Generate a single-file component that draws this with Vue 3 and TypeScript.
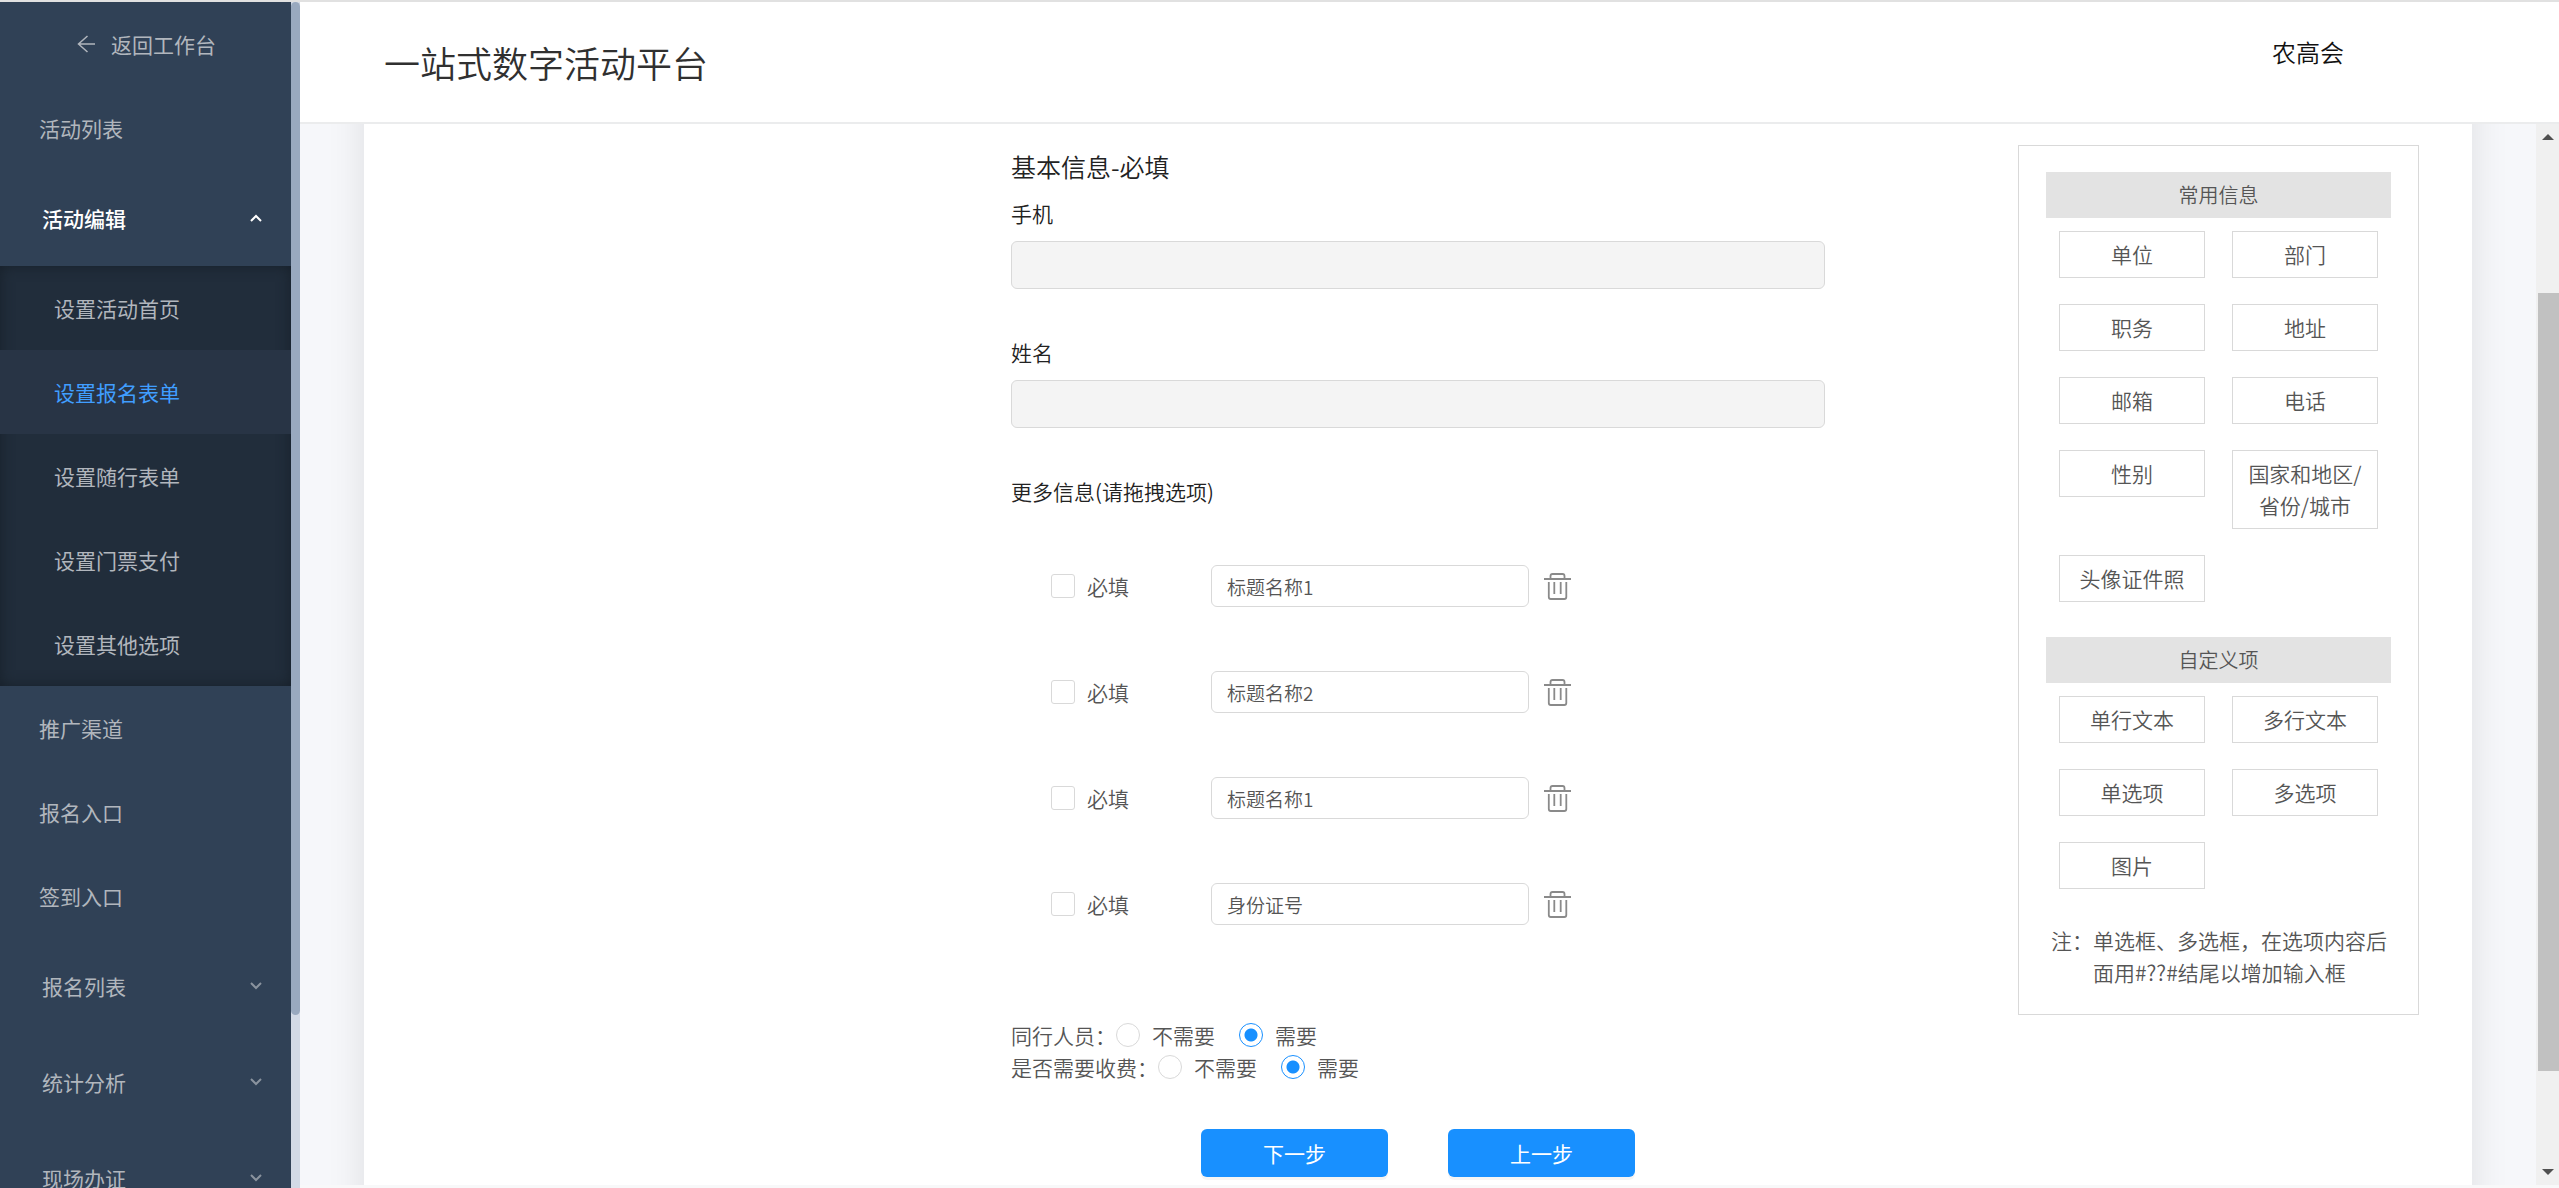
<script setup lang="ts">
import { ref } from 'vue'

interface MenuItem {
  label: string
  group?: boolean
  open?: boolean
  children?: { label: string; active?: boolean }[]
}

interface CustomField {
  id: number
  title: string
  required: boolean
}

const menu: MenuItem[] = [
  { label: '活动列表' },
  {
    label: '活动编辑',
    group: true,
    open: true,
    children: [
      { label: '设置活动首页' },
      { label: '设置报名表单', active: true },
      { label: '设置随行表单' },
      { label: '设置门票支付' },
      { label: '设置其他选项' },
    ],
  },
  { label: '推广渠道' },
  { label: '报名入口' },
  { label: '签到入口' },
  { label: '报名列表', group: true },
  { label: '统计分析', group: true },
  { label: '现场办证', group: true },
]

const fields = ref<CustomField[]>([
  { id: 1, title: '标题名称1', required: false },
  { id: 2, title: '标题名称2', required: false },
  { id: 3, title: '标题名称1', required: false },
  { id: 4, title: '身份证号', required: false },
])

const companion = ref('yes')
const charge = ref('yes')

const commonItems = ['单位', '部门', '职务', '地址', '邮箱', '电话', '性别', '国家和地区/省份/城市', '头像证件照']
const customItems = ['单行文本', '多行文本', '单选项', '多选项', '图片']

function removeField(id: number) {
  fields.value = fields.value.filter((f) => f.id !== id)
}
</script>

<template>
  <div class="app">
    <aside class="sidebar">
      <nav class="menu">
        <a href="#" class="back">
          <svg width="18" height="18" viewBox="0 0 18 18" fill="none" stroke="currentColor" stroke-width="1.5">
            <path d="M18 9H1.500M10.500 1L1.500 9l9 8" />
          </svg>
          <span>返回工作台</span>
        </a>
        <template v-for="item in menu" :key="item.label">
          <a href="#" class="item" :class="{ group: item.group, open: item.open }">
            <span>{{ item.label }}</span>
            <svg v-if="item.group" class="chevron" width="12" height="8" viewBox="0 0 12 8" fill="none" stroke="currentColor" stroke-width="2">
              <path :d="item.open ? 'M1 7l5-5 5 5' : 'M1 1l5 5 5-5'" />
            </svg>
          </a>
          <div v-if="item.children" class="submenu">
            <a v-for="child in item.children" :key="child.label" href="#" class="subitem" :class="{ active: child.active }">{{ child.label }}</a>
          </div>
        </template>
      </nav>
      <div class="side-track"><div class="side-thumb"></div></div>
    </aside>

    <div class="main">
      <header class="header">
        <h1 class="title">一站式数字活动平台</h1>
        <span class="user">农高会</span>
      </header>

      <div class="body">
        <div class="scroller">
          <div class="card">
            <form class="form" @submit.prevent>
              <h2 class="heading">基本信息-必填</h2>
              <div class="field">
                <label for="phone">手机</label>
                <input id="phone" type="text" disabled />
              </div>
              <div class="field">
                <label for="name">姓名</label>
                <input id="name" type="text" disabled />
              </div>
              <h3 class="subheading">更多信息(请拖拽选项)</h3>
              <div class="rows">
                <div v-for="f in fields" :key="f.id" class="row">
                  <label class="required">
                    <input v-model="f.required" type="checkbox" />
                    <span>必填</span>
                  </label>
                  <input v-model="f.title" class="name-input" type="text" aria-label="标题" />
                  <button type="button" class="trash" aria-label="删除" @click="removeField(f.id)">
                    <svg width="27" height="27" viewBox="0 0 27 27" fill="none" stroke="#8a8a8a" stroke-width="1.800">
                      <path d="M0 6h27M6.500 6V3q0-2 2-2h10q2 0 2 2v3" />
                      <path d="M4.800 9v15q0 2 2 2h13.500q2 0 2-2V9" />
                      <path d="M10.300 9v12M16.700 9v12" />
                    </svg>
                  </button>
                </div>
              </div>
              <div class="options">
                <div class="option" role="radiogroup" aria-label="同行人员">
                  <span>同行人员：</span>
                  <label><input v-model="companion" type="radio" name="companion" value="no" />不需要</label>
                  <label><input v-model="companion" type="radio" name="companion" value="yes" />需要</label>
                </div>
                <div class="option" role="radiogroup" aria-label="是否需要收费">
                  <span>是否需要收费：</span>
                  <label><input v-model="charge" type="radio" name="charge" value="no" />不需要</label>
                  <label><input v-model="charge" type="radio" name="charge" value="yes" />需要</label>
                </div>
              </div>
              <div class="actions">
                <button type="button" class="primary">下一步</button>
                <button type="button" class="primary">上一步</button>
              </div>
            </form>

            <section class="panel">
              <h4 class="panel-title">常用信息</h4>
              <div class="chips">
                <button v-for="t in commonItems" :key="t" type="button" class="chip">{{ t }}</button>
              </div>
              <h4 class="panel-title">自定义项</h4>
              <div class="chips">
                <button v-for="t in customItems" :key="t" type="button" class="chip">{{ t }}</button>
              </div>
              <p class="note">注：单选框、多选框，在选项内容后面用#??#结尾以增加输入框</p>
            </section>
          </div>
        </div>

        <div class="scrollbar">
          <svg width="12" height="6" viewBox="0 0 12 6" fill="#505050"><path d="M0 6l6-6 6 6z" /></svg>
          <div class="track">
            <div class="thumb"></div>
          </div>
          <svg width="12" height="6" viewBox="0 0 12 6" fill="#505050"><path d="M0 0l6 6 6-6z" /></svg>
        </div>
      </div>
    </div>
  </div>
</template>

<style>
body {
  margin: 0;
  overflow: hidden;
}
</style>

<style scoped>
* {
  box-sizing: border-box;
}

.app {
  display: flex;
  height: 100vh;
  overflow: hidden;
  border-top: 2px solid #e1e1e1;
  background: #fff;
  color: #555;
  font-family: "Noto Sans CJK SC", "Noto Sans", sans-serif;
  font-size: 21px;
  font-weight: 350;
  line-height: 32px;
}

h1, h2, h3, h4, p {
  margin: 0;
  font-weight: inherit;
}

a {
  color: inherit;
  text-decoration: none;
}

input, button {
  margin: 0;
  font: inherit;
  color: inherit;
}

/* Sidebar */
.sidebar {
  display: flex;
  flex: 0 0 300px;
  background: #304156;
  color: #b1b6bd;
  font-weight: 400;
}

.menu {
  flex: 1;
  overflow: hidden;
}

.back {
  display: flex;
  align-items: center;
  gap: 16px;
  height: 84px;
  padding-left: 77px;
}

.item {
  display: flex;
  align-items: center;
  justify-content: space-between;
  height: 84px;
  padding: 0 29px 0 39px;
}

.item.group {
  height: 96px;
  padding-left: 42px;
}

.item.open {
  color: #fff;
  font-weight: 500;
}

.chevron {
  opacity: 0.7;
}

.open .chevron {
  opacity: 1;
}

.submenu {
  background: #212d3b;
  box-shadow: inset 0 0 14px #17202a;
}

.subitem {
  display: flex;
  align-items: center;
  height: 84px;
  padding-left: 54px;
}

.subitem.active {
  background: #283445;
  color: #409eff;
}

.side-track {
  flex: 0 0 9px;
  background: #d3dae6;
}

.side-thumb {
  height: 85.4%;
  border-radius: 5px;
  background: #99a9bf;
}

/* Header */
.main {
  display: flex;
  flex: 1;
  flex-direction: column;
  min-width: 0;
  border-bottom: 3px solid #f8f8f9;
}

.header {
  display: flex;
  justify-content: space-between;
  flex: 0 0 122px;
  padding: 0 215px 0 84px;
  border-bottom: 2px solid #ebeced;
}

.title {
  padding-top: 36px;
  color: #303030;
  font-size: 36px;
  line-height: 48px;
}

.user {
  padding-top: 32px;
  color: #111;
  font-size: 24px;
  line-height: 36px;
}

.body {
  display: flex;
  flex: 1;
  min-height: 0;
}

.scroller {
  display: flex;
  flex: 1;
  min-width: 0;
  padding: 0 64px;
  overflow: hidden;
  background: #f6f7fa;
}

/* The card runs past both edges of the scroll area */
.card {
  display: grid;
  grid-template-columns: 647fr 814fr 193fr 401fr 53fr;
  align-items: start;
  flex: 1;
  margin: -40px 0;
  padding: 40px 0;
  background: #fff;
  box-shadow: 0 0 36px rgba(0, 0, 0, 0.1);
}

/* Form */
.form {
  grid-column: 2;
  padding-top: 24px;
}

.heading {
  margin-bottom: 13px;
  color: #222;
  font-size: 25px;
  line-height: 36px;
}

.field {
  margin-bottom: 47px;
  color: #222;
}

.field label {
  display: block;
  margin-bottom: 12px;
}

.field input {
  display: block;
  width: 100%;
  height: 48px;
  border: 1px solid #d9d9d9;
  border-radius: 6px;
  background: #f4f4f4;
}

.subheading {
  margin-bottom: 58px;
  color: #222;
  font-size: 21px;
}

.rows {
  display: flex;
  flex-direction: column;
  gap: 64px;
  padding-left: 40px;
}

.row {
  display: flex;
  align-items: center;
}

.required {
  display: flex;
  align-items: center;
  gap: 12px;
  width: 160px;
}

.required input {
  width: 24px;
  height: 24px;
  border: 1px solid #d9d9d9;
  border-radius: 3px;
  background: #fff;
  appearance: none;
}

.required input:checked {
  border-color: #1890ff;
  background: #1890ff;
}

.name-input {
  width: 318px;
  height: 42px;
  padding: 0 15px;
  border: 1px solid #d9d9d9;
  border-radius: 6px;
  background: #fff;
  font-size: 19px;
}

.trash {
  margin-left: 15px;
  padding: 0;
  border: 0;
  background: none;
  cursor: pointer;
}

.trash svg {
  display: block;
}

.options {
  margin-top: 94px;
}

.option {
  display: flex;
}

.option label {
  display: flex;
  align-items: center;
  gap: 12px;
  margin-right: 24px;
}

.option input {
  width: 24px;
  height: 24px;
  border: 1px solid #d9d9d9;
  border-radius: 50%;
  background: #fff;
  appearance: none;
}

.option input:checked {
  border-color: #1890ff;
  background: radial-gradient(circle, #1890ff 0 6px, #fff 7px);
}

.actions {
  display: flex;
  gap: 60px;
  margin-top: 46px;
  padding-left: 190px;
}

.primary {
  width: 187px;
  height: 48px;
  padding: 0;
  border: 0;
  border-radius: 6px;
  background: #1890ff;
  box-shadow: 0 3px 0 rgba(0, 0, 0, 0.04);
  color: #fff;
  font-weight: 400;
}

/* Item palette */
.panel {
  grid-column: 4;
  margin-top: 21px;
  padding: 26px 27px;
  border: 1px solid #d9d9d9;
}

.panel-title {
  margin-bottom: 13px;
  padding: 7px 0;
  background: #e3e3e3;
  font-size: 20px;
  text-align: center;
}

.chips {
  display: grid;
  grid-template-columns: 1fr 1fr;
  align-items: start;
  gap: 26px 27px;
  margin-bottom: 35px;
  padding: 0 13px;
}

.chip {
  padding: 6px 12px 7px;
  border: 1px solid #d9d9d9;
  background: #fff;
}

.note {
  padding-left: 47px;
  text-indent: -42px;
  white-space: normal;
}

/* Page scrollbar */
.scrollbar {
  display: flex;
  flex: 0 0 23px;
  flex-direction: column;
  align-items: center;
  gap: 10px;
  padding: 10px 0;
  background: #f0f0f0;
}

.track {
  display: flex;
  flex: 1;
  align-self: stretch;
  flex-direction: column;
  padding-left: 2px;
}

.track::before {
  content: "";
  flex: 143;
}

.track::after {
  content: "";
  flex: 88;
}

.thumb {
  flex: 778;
  background: #c1c1c1;
}
</style>
